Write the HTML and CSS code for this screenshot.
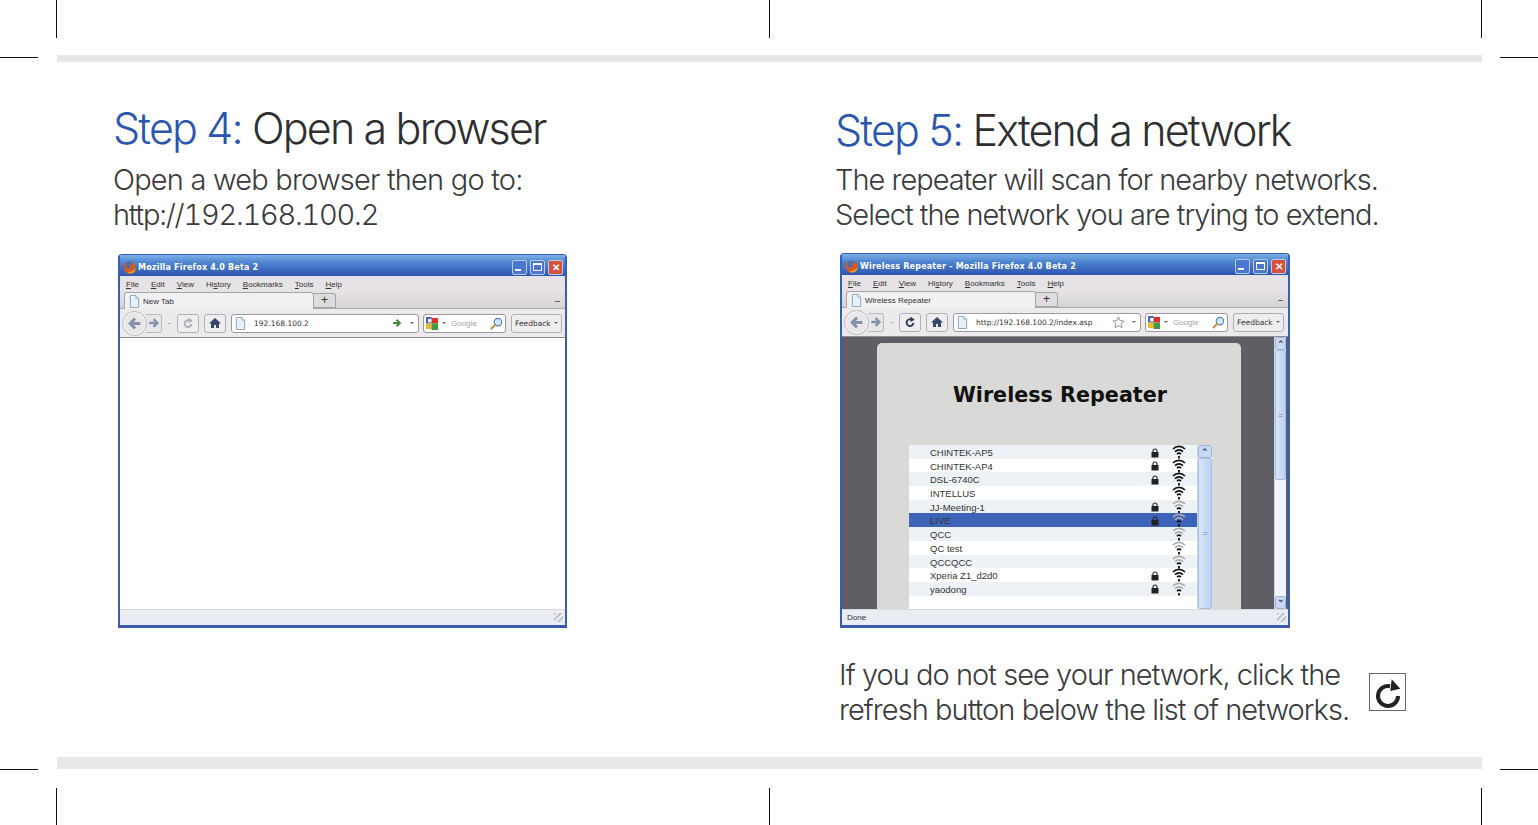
FILE: index.html
```html
<!DOCTYPE html>
<html>
<head>
  <title>Quick Install Guide</title>
  <link rel="stylesheet" href="styles.css">
</head>
<body>
  <svg class="defs" width="0" height="0">
    <symbol id="fox" viewBox="0 0 16 16">
      <circle cx="8" cy="8" r="6.500" fill="#4a6fb0"/>
      <path d="M2 4.500C.5 11 5 15.500 9 15.500c4 0 6.500-3 6.500-6.500 0-3-2-6-5.500-7.500 2 2 2 4 1 5-1-2-3-2-4-1 2 0 3 2 2 4-2 1-5 0-5-3 0-1 .3-2 1-3C3.500 3.500 2.500 4 2 4.500z" fill="#d9591b"/>
      <path d="M9 15.500c4 0 6.500-3 6.500-6.500-2 3-5 5-9.500 5 1 1 2 1.500 3 1.500z" fill="#f1a11f"/>
    </symbol>
    <symbol id="page" viewBox="0 0 12 14">
      <path d="M1.500.5h6l3 3v10h-9z" fill="#fff" stroke="#7f9db9"/>
      <path d="M7.500.5v3h3" fill="#dce8f5" stroke="#7f9db9"/>
      <path d="M2.500 2h4v2h3v8.500h-7z" fill="#e6eef8"/>
    </symbol>
    <symbol id="google" viewBox="0 0 14 14">
      <rect x="0" y="0" width="6" height="7" fill="#3c67c4"/>
      <rect x="6" y="1" width="7" height="6" fill="#d8322a"/>
      <rect x="0" y="7" width="6" height="6" fill="#f0b52b"/>
      <rect x="6" y="7" width="7" height="7" fill="#3f9c3f"/>
      <circle cx="4" cy="4" r="2" fill="#fff"/>
    </symbol>
    <symbol id="glass" viewBox="0 0 14 14">
      <circle cx="8.500" cy="5.500" r="4" fill="#cfe6f7" stroke="#4c86b5" stroke-width="1.200"/>
      <path d="M5.500 8.500L1.500 12.500" stroke="#c98a3a" stroke-width="2.200" stroke-linecap="round"/>
    </symbol>
    <symbol id="lock" viewBox="0 0 8 10">
      <path d="M2 4.500V3a2 2 0 0 1 4 0v1.500" fill="none" stroke="currentColor" stroke-width="1.100"/>
      <rect x=".5" y="4" width="7" height="5.500" fill="currentColor"/>
    </symbol>
    <symbol id="wifi" viewBox="0 0 14 16">
      <path d="M1 5C4.500 1.500 9.500 1.500 13 5" fill="none" stroke="currentColor" stroke-width="1.700"/>
      <path d="M3 7.600C5.500 5.400 8.500 5.400 11 7.600" fill="none" stroke="currentColor" stroke-width="1.700"/>
      <path d="M5 10C6.200 9 7.800 9 9 10" fill="none" stroke="#111" stroke-width="1.700"/>
      <path d="M7 12V14.500" stroke="#111" stroke-width="1.800"/>
    </symbol>
    <symbol id="arrow-l" viewBox="0 0 14 14">
      <path d="M12.500 7H4M7.500 2.500L3 7l4.500 4.500" fill="none" stroke="currentColor" stroke-width="2.800"/>
    </symbol>
    <symbol id="arrow-r" viewBox="0 0 14 14">
      <path d="M1.500 7H10M6.500 2.500L11 7l-4.500 4.500" fill="none" stroke="currentColor" stroke-width="2.800"/>
    </symbol>
    <symbol id="reload" viewBox="0 0 14 14">
      <path d="M8 3.800A4 4 0 1 0 11 8" fill="none" stroke="currentColor" stroke-width="2.200"/>
      <path d="M7.500 .5L12.500 4.500L7.500 7z" fill="currentColor"/>
    </symbol>
    <symbol id="home" viewBox="0 0 12 12">
      <path d="M6 1L0 6.500h2V11h3V8h2v3h3V6.500h2z" fill="#34496b"/>
    </symbol>
    <symbol id="star" viewBox="0 0 14 14">
      <path d="M7 1l1.800 4 4.200.4-3.200 2.800 1 4.300L7 10.300 3.200 12.500l1-4.300L1 5.400 5.200 5z" fill="#fff" stroke="#8a8a8a"/>
    </symbol>
  </svg>

  <div class="sheet">
    <i class="mark v tl"></i><i class="mark v tc"></i><i class="mark v tr"></i>
    <i class="mark v bl"></i><i class="mark v bc"></i><i class="mark v br"></i>
    <i class="mark h lt"></i><i class="mark h rt"></i>
    <i class="mark h lb"></i><i class="mark h rb"></i>

    <div class="band"></div>

    <div class="steps">
      <section class="step step-left">
        <h2><span class="step-no">Step 4:</span> Open a browser</h2>
        <p class="lead">Open a web browser then go to:<br><span class="addr">http://192.168.100.2</span></p>

        <div class="window">
          <div class="titlebar">
            <svg class="fox"><use href="#fox"/></svg>
            <span class="title-text">Mozilla Firefox 4.0 Beta 2</span>
            <div class="win-btns">
              <span class="win-btn"><i class="min"></i></span>
              <span class="win-btn"><i class="max"></i></span>
              <span class="win-btn close">✕</span>
            </div>
          </div>
          <div class="menubar">
            <span><u>F</u>ile</span><span><u>E</u>dit</span><span><u>V</u>iew</span><span>Hi<u>s</u>tory</span><span><u>B</u>ookmarks</span><span><u>T</u>ools</span><span><u>H</u>elp</span>
          </div>
          <div class="tabstrip">
            <div class="tab"><svg class="page-icon"><use href="#page"/></svg>New Tab</div>
            <div class="tab-new">+</div>
            <span class="tab-drop"></span>
          </div>
          <div class="navbar">
            <span class="back"><svg><use href="#arrow-l"/></svg></span>
            <span class="forward"><svg><use href="#arrow-r"/></svg></span>
            <span class="nav-sep">-</span>
            <span class="nav-btn reload muted"><svg><use href="#reload"/></svg></span>
            <span class="nav-btn home"><svg><use href="#home"/></svg></span>
            <div class="urlbar">
              <svg class="page-icon"><use href="#page"/></svg>
              <span class="url">192.168.100.2</span>
              <svg class="go"><use href="#arrow-r"/></svg>
              <i class="caret"></i>
            </div>
            <div class="searchbar">
              <svg class="g-icon"><use href="#google"/></svg>
              <i class="caret"></i>
              <span class="search-text">Google</span>
              <svg class="glass"><use href="#glass"/></svg>
            </div>
            <span class="feedback">Feedback <i class="caret"></i></span>
          </div>
          <div class="viewport blank"></div>
          <div class="statusbar"><span class="grip"></span></div>
        </div>
      </section>

      <section class="step step-right">
        <h2><span class="step-no">Step 5:</span> Extend a network</h2>
        <p class="lead">The repeater will scan for nearby networks.<br>Select the network you are trying to extend.</p>

        <div class="window">
          <div class="titlebar">
            <svg class="fox"><use href="#fox"/></svg>
            <span class="title-text">Wireless Repeater - Mozilla Firefox 4.0 Beta 2</span>
            <div class="win-btns">
              <span class="win-btn"><i class="min"></i></span>
              <span class="win-btn"><i class="max"></i></span>
              <span class="win-btn close">✕</span>
            </div>
          </div>
          <div class="menubar">
            <span><u>F</u>ile</span><span><u>E</u>dit</span><span><u>V</u>iew</span><span>Hi<u>s</u>tory</span><span><u>B</u>ookmarks</span><span><u>T</u>ools</span><span><u>H</u>elp</span>
          </div>
          <div class="tabstrip">
            <div class="tab"><svg class="page-icon"><use href="#page"/></svg>Wireless Repeater</div>
            <div class="tab-new">+</div>
            <span class="tab-drop"></span>
          </div>
          <div class="navbar">
            <span class="back"><svg><use href="#arrow-l"/></svg></span>
            <span class="forward"><svg><use href="#arrow-r"/></svg></span>
            <span class="nav-sep">-</span>
            <span class="nav-btn reload"><svg><use href="#reload"/></svg></span>
            <span class="nav-btn home"><svg><use href="#home"/></svg></span>
            <div class="urlbar">
              <svg class="page-icon"><use href="#page"/></svg>
              <span class="url">http://192.168.100.2/index.asp</span>
              <svg class="star"><use href="#star"/></svg>
              <i class="caret"></i>
            </div>
            <div class="searchbar">
              <svg class="g-icon"><use href="#google"/></svg>
              <i class="caret"></i>
              <span class="search-text">Google</span>
              <svg class="glass"><use href="#glass"/></svg>
            </div>
            <span class="feedback">Feedback <i class="caret"></i></span>
          </div>
          <div class="viewport dark">
            <div class="panel">
              <h3>Wireless Repeater</h3>
              <div class="list-wrap">
                <div class="netlist">
                  <div class="net"><span>CHINTEK-AP5</span><svg class="lock"><use href="#lock"/></svg><svg class="wifi"><use href="#wifi"/></svg></div>
                  <div class="net"><span>CHINTEK-AP4</span><svg class="lock"><use href="#lock"/></svg><svg class="wifi"><use href="#wifi"/></svg></div>
                  <div class="net"><span>DSL-6740C</span><svg class="lock"><use href="#lock"/></svg><svg class="wifi"><use href="#wifi"/></svg></div>
                  <div class="net"><span>INTELLUS</span><i></i><svg class="wifi"><use href="#wifi"/></svg></div>
                  <div class="net"><span>JJ-Meeting-1</span><svg class="lock"><use href="#lock"/></svg><svg class="wifi weak"><use href="#wifi"/></svg></div>
                  <div class="net selected"><span>LIVE</span><svg class="lock"><use href="#lock"/></svg><svg class="wifi weak"><use href="#wifi"/></svg></div>
                  <div class="net"><span>QCC</span><i></i><svg class="wifi weak"><use href="#wifi"/></svg></div>
                  <div class="net"><span>QC test</span><i></i><svg class="wifi weak"><use href="#wifi"/></svg></div>
                  <div class="net"><span>QCCQCC</span><i></i><svg class="wifi weak"><use href="#wifi"/></svg></div>
                  <div class="net"><span>Xperia Z1_d2d0</span><svg class="lock"><use href="#lock"/></svg><svg class="wifi"><use href="#wifi"/></svg></div>
                  <div class="net"><span>yaodong</span><svg class="lock"><use href="#lock"/></svg><svg class="wifi weak"><use href="#wifi"/></svg></div>
                </div>
                <div class="scroll inner">
                  <span class="scroll-btn">⌃</span>
                  <span class="thumb">=</span>
                </div>
              </div>
            </div>
            <div class="scroll outer">
              <span class="scroll-btn">⌃</span>
              <span class="thumb">=</span>
              <span class="track"></span>
              <span class="scroll-btn down">⌄</span>
            </div>
          </div>
          <div class="statusbar">Done<span class="grip"></span></div>
        </div>

        <div class="note">
          <p>If you do not see your network, click the<br>refresh button below the list of networks.</p>
          <span class="refresh">
            <svg viewBox="0 0 36 36"><path d="M20 12.200A10 10 0 1 0 28 22" fill="none" stroke="#222" stroke-width="4"/><path d="M21.700 5.300L30.300 14.700L20.300 17z" fill="#222"/></svg>
          </span>
        </div>
      </section>
    </div>

    <div class="band"></div>
  </div>
</body>
</html>
```

FILE: styles.css
```css
* {
  box-sizing: border-box;
}

body {
  margin: 0;
  background: #fff;
  font-family: 'Inter', 'Liberation Sans', sans-serif;
  color: #3a3a3c;
}

.defs {
  position: absolute;
}

.sheet {
  position: relative;
  width: 1538px;
  height: 825px;
  padding-top: 55px;
  overflow: hidden;
}

.band {
  height: 7px;
  margin: 0 56px 0 57px;
  background: #e8e8e8;
}

.sheet > .band:last-child {
  height: 12px;
}

/* crop marks */
.mark {
  position: absolute;
  background: #111;
}

.mark.v { width: 1px; height: 38px; }
.mark.h { width: 38px; height: 1px; }
.tl { left: 56px; top: 0; }
.tc { left: 769px; top: 0; }
.tr { left: 1481px; top: 0; }
.bl { left: 56px; top: 788px; height: 37px; }
.bc { left: 769px; top: 788px; height: 37px; }
.br { left: 1481px; top: 788px; height: 37px; }
.lt { left: 0; top: 57px; }
.rt { left: 1500px; top: 57px; }
.lb { left: 0; top: 769px; }
.rb { left: 1500px; top: 769px; }

.steps {
  display: grid;
  grid-template-columns: 722px 1fr;
  height: 695px;
  padding-left: 113px;
}

.step h2 {
  margin: 0;
  font-size: 43px;
  font-weight: 300;
  line-height: 52px;
  letter-spacing: -1.85px;
  color: #2f2f31;
}

.step-left { padding-top: 40px; }
.step-right { padding-top: 42px; }

.step-no {
  color: #2a56b0;
}

.lead {
  margin: 8px 0 0;
  font-size: 29px;
  font-weight: 300;
  line-height: 35px;
  letter-spacing: -0.8px;
}

.step-right .lead {
  margin-top: 6px;
  letter-spacing: -1px;
}

.addr {
  font-variant-numeric: tabular-nums;
  letter-spacing: -1.25px;
}

/* browser window */
.window {
  display: flex;
  flex-direction: column;
  width: 449px;
  height: 374px;
  margin: 22px 0 0 5px;
  border: 2px solid #3a5cb2;
  border-top-width: 1px;
  border-bottom-width: 3px;
  border-radius: 4px 4px 0 0;
  background: #e6e2e6;
  font-family: 'Liberation Sans', sans-serif;
  color: #333;
}

.step-right .window {
  width: 450px;
  height: 375px;
  margin: 21px 0 0 5px;
}

.titlebar {
  display: flex;
  align-items: center;
  height: 21px;
  padding: 3px 2px 0;
  background: linear-gradient(#7cb0e4 0%, #4f86d2 35%, #2f55ae 100%);
  color: #fff;
}

.fox {
  width: 14px;
  height: 14px;
  margin-right: 2px;
}

.title-text {
  font-family: 'DejaVu Sans', sans-serif;
  font-size: 8px;
  font-weight: 700;
  letter-spacing: .2px;
}

.win-btns {
  display: flex;
  gap: 3px;
  margin-left: auto;
}

.win-btn {
  display: flex;
  align-items: center;
  justify-content: center;
  width: 15px;
  height: 15px;
  border: 1px solid #b8cdec;
  border-radius: 2px;
  background: #4a78cf;
  font-size: 10px;
  font-weight: 700;
  color: #fff;
}

.win-btn.close {
  background: #d9503a;
}

.min {
  width: 6px;
  height: 2px;
  margin-top: 6px;
  margin-right: 3px;
  background: #fff;
}

.max {
  width: 9px;
  height: 8px;
  border: 1px solid #fff;
  border-top-width: 2px;
}

.menubar {
  display: flex;
  gap: 12px;
  align-items: center;
  height: 16px;
  padding-left: 6px;
  font-size: 8px;
}

.tabstrip {
  display: flex;
  align-items: flex-end;
  height: 17px;
  padding-left: 4px;
  background: linear-gradient(#e6e2e6, #d6d3d6);
  border-bottom: 1px solid #a9a9ab;
}

.tab {
  display: flex;
  align-items: center;
  gap: 3px;
  width: 190px;
  height: 17px;
  margin-bottom: -1px;
  padding-left: 4px;
  border: 1px solid #a5a5a8;
  border-bottom: 0;
  border-radius: 3px 3px 0 0;
  background: #f1f0f2;
  font-size: 8px;
}

.page-icon {
  width: 11px;
  height: 13px;
}

.tab-new {
  width: 22px;
  height: 15px;
  border: 1px solid #a5a5a8;
  border-left: 0;
  border-radius: 0 3px 0 0;
  background: #dedcdf;
  text-align: center;
  font-size: 12px;
  line-height: 13px;
}

.tab-drop {
  width: 5px;
  height: 1px;
  margin: 0 5px 6px auto;
  background: #666;
}

.navbar {
  display: flex;
  align-items: center;
  height: 29px;
  padding-left: 2px;
  background: #eceaec;
  border-bottom: 1px solid #8e8e90;
}

.back {
  display: flex;
  align-items: center;
  justify-content: center;
  position: relative;
  z-index: 1;
  width: 25px;
  height: 25px;
  border: 2px solid #f8f8f8;
  outline: 1px solid #b5b5b7;
  outline-offset: -1px;
  border-radius: 50%;
  background: #e9e7ea;
  color: #8493ab;
}

.back svg {
  width: 15px;
  height: 15px;
}

.forward {
  display: flex;
  align-items: center;
  justify-content: center;
  width: 16px;
  height: 19px;
  margin-left: -1px;
  border: 1px solid #b9b9bb;
  border-left: 0;
  border-radius: 0 3px 3px 0;
  background: #e8e6e8;
  color: #8493ab;
}

.forward svg {
  width: 12px;
  height: 12px;
}

.nav-sep {
  width: 15px;
  text-align: center;
  font-size: 9px;
  color: #888;
}

.nav-btn {
  display: flex;
  align-items: center;
  justify-content: center;
  width: 22px;
  height: 19px;
  margin-right: 5px;
  border: 1px solid #b0b0b2;
  border-radius: 3px;
  background: #efedef;
}

.nav-btn svg {
  width: 12px;
  height: 12px;
}

.reload {
  color: #2b3a55;
}

.reload.muted {
  color: #a8aeb6;
}

.urlbar,
.searchbar {
  display: flex;
  align-items: center;
  height: 19px;
  border: 1px solid #9a9a9c;
  border-radius: 3px;
  background: #fff;
}

.urlbar {
  width: 188px;
  padding: 0 4px 0 3px;
}

.urlbar .page-icon {
  margin-right: 8px;
}

.url {
  flex: 1;
  font-family: 'DejaVu Sans', sans-serif;
  font-size: 7.500px;
  white-space: nowrap;
}

.go {
  width: 10px;
  height: 10px;
  margin-right: 8px;
  color: #3f8a3f;
}

.star {
  width: 13px;
  height: 13px;
  margin-right: 7px;
}

.caret {
  display: inline-block;
  width: 0;
  height: 0;
  border: 2px solid transparent;
  border-top: 2px solid #666;
  border-bottom: 0;
}

.searchbar {
  width: 83px;
  margin-left: 4px;
  padding: 0 2px;
  gap: 3px;
}

.g-icon {
  width: 13px;
  height: 13px;
}

.search-text {
  flex: 1;
  margin-left: 2px;
  font-size: 8px;
  color: #a3a3a3;
}

.glass {
  width: 13px;
  height: 13px;
}

.feedback {
  display: flex;
  align-items: center;
  gap: 3px;
  height: 19px;
  margin-left: 5px;
  padding: 0 3px;
  border: 1px solid #b0b0b2;
  border-radius: 3px;
  background: #efedef;
  font-family: 'DejaVu Sans', sans-serif;
  font-size: 7.500px;
  white-space: nowrap;
}

.viewport {
  flex: 1;
  display: flex;
  min-height: 0;
}

.viewport.blank {
  background: #fff;
}

.viewport.dark {
  background: #5e5f65;
}

.statusbar {
  display: flex;
  align-items: center;
  height: 16px;
  padding: 0 2px 0 5px;
  background: #e9ecf3;
  border-top: 1px solid #d9d9dc;
  font-size: 8px;
}

.grip {
  width: 9px;
  height: 9px;
  margin-left: auto;
  background: repeating-linear-gradient(135deg, #c4c5c9 0 2px, transparent 2px 4px);
}

/* page inside the browser */
.panel {
  display: flex;
  flex-direction: column;
  width: 364px;
  margin: 6px 33px 0 35px;
  border-radius: 5px 5px 0 0;
  background: #d9d9d7;
  overflow: hidden;
}

.panel h3 {
  margin: 38px 0 36px;
  padding-left: 2px;
  font-family: 'DejaVu Sans', sans-serif;
  font-size: 20.700px;
  line-height: 28px;
  font-weight: 700;
  text-align: center;
  color: #111;
}

.list-wrap {
  display: flex;
  flex: 1;
  min-height: 0;
  width: 303px;
  margin-left: 32px;
  background: #fff;
  overflow: hidden;
}

.netlist {
  flex: 1;
  font-size: 9.500px;
}

.net {
  display: grid;
  grid-template-columns: 221px 21px 1fr;
  align-items: center;
  height: 13.700px;
  padding: 0 0 1px 21px;
  color: #333;
}

.net:nth-child(odd) {
  background: #edf2f7;
}

.net.selected {
  background: #3d63b8;
}

.lock {
  width: 8px;
  height: 10px;
  color: #222;
}

.wifi {
  width: 14px;
  height: 16px;
  margin-top: -1px;
  color: #111;
}

.wifi.weak {
  color: #ababab;
}

.scroll {
  display: flex;
  flex-direction: column;
  background: #f3f5fb;
  border-left: 1px solid #c9d5ea;
}

.scroll.inner {
  width: 15px;
}

.scroll.outer {
  width: 12px;
}

.scroll-btn {
  flex: none;
  height: 13px;
  border: 1px solid #9fb6dc;
  border-radius: 2px;
  background: #c9d9f1;
  font-size: 9px;
  line-height: 13px;
  font-weight: 700;
  text-align: center;
  color: #3b4e73;
}

.scroll-btn.down {
  line-height: 5px;
}

.thumb {
  display: flex;
  align-items: center;
  justify-content: center;
  flex: 1;
  border: 1px solid #a9bfe2;
  border-radius: 2px;
  background: linear-gradient(90deg, #d9e6f8, #bcd1f0);
  font-size: 8px;
  color: #6f86ad;
}

.scroll.outer .thumb {
  flex: none;
  height: 130px;
}

.track {
  flex: 1;
}

/* refresh note */
.note {
  display: flex;
  align-items: center;
  margin: 29px 0 0 4px;
}

.note p {
  margin: 0;
  font-size: 29px;
  font-weight: 300;
  line-height: 35px;
  letter-spacing: -0.96px;
}

.refresh {
  display: block;
  flex: none;
  width: 37px;
  height: 38px;
  margin-left: 20px;
  border: 1px solid #666;
  background: #fff;
}

.refresh svg {
  display: block;
  width: 36px;
  height: 36px;
}
```
